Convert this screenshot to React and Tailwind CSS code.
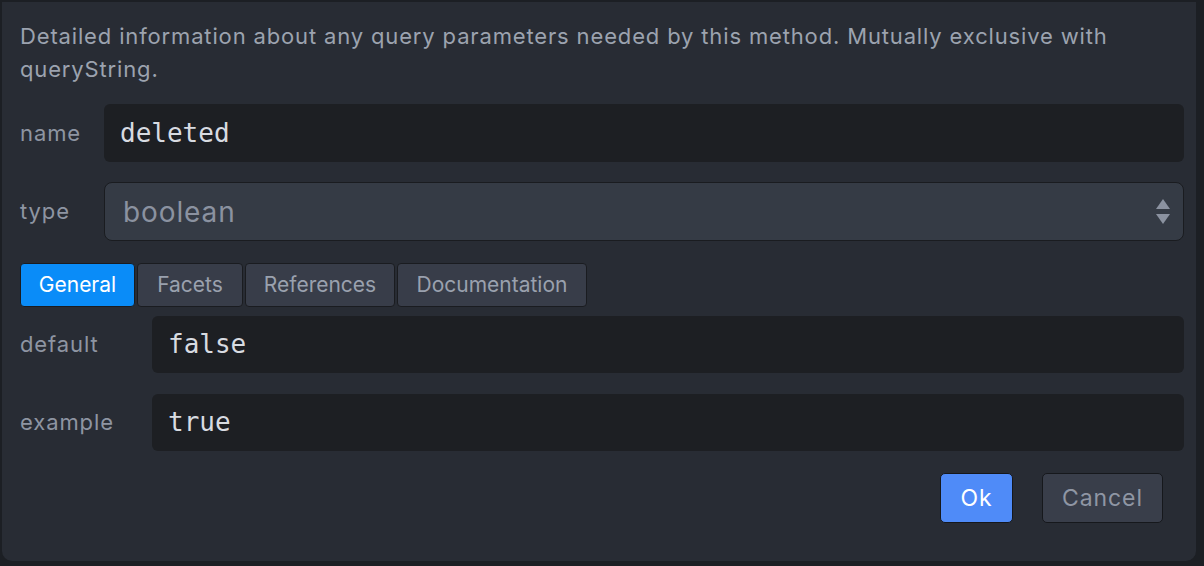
export default function App() {
  const sans = { fontFamily: 'Inter, "Liberation Sans", sans-serif' };
  const mono = { fontFamily: '"DejaVu Sans Mono", "Liberation Mono", monospace' };
  const tabs = [
    ["General", "w-[115px]"],
    ["Facets", "w-[106px]"],
    ["References", "w-[150px]"],
    ["Documentation", "w-[190px]"],
  ];
  return (
    <div className="w-[1204px] h-[566px] bg-[#1c1f24] overflow-hidden" style={sans}>
      <div className="ml-[2px] mt-[2px] w-[1194px] h-[559px] bg-[#282c34] rounded-b-[10px] pl-[18px] pr-[12px] pt-[18px]">
        <p className="text-[22px] leading-[33px] tracking-[0.85px] text-[#9ca3af] pr-[40px]">
          Detailed information about any query parameters needed by this method. Mutually exclusive with queryString.
        </p>
        <div className="mt-[18px] flex items-center h-[58px]">
          <div className="w-[84px] text-[22px] tracking-[0.9px] text-[#8e95a2]">name</div>
          <div className="flex-1 h-full bg-[#1d1f23] rounded-[6px] flex items-center pl-[16px] text-[26px] text-[#d8dbe1]" style={mono}>deleted</div>
        </div>
        <div className="mt-[20px] flex items-center h-[59px]">
          <div className="w-[84px] text-[22px] tracking-[0.9px] text-[#8e95a2]">type</div>
          <div className="flex-1 h-full bg-[#353b45] border border-[#1a1c20] rounded-[8px] flex items-center pl-[18px] pr-[12px] text-[28px] tracking-[0.9px] text-[#8b92a0]">
            <span className="flex-1">boolean</span>
            <svg width="16" height="30" viewBox="0 0 16 30">
              <polygon points="8,2 15,12 1,12" fill="#8b92a0" />
              <polygon points="1,17 15,17 8,27" fill="#8b92a0" />
            </svg>
          </div>
        </div>
        <div className="mt-[22px] flex gap-[2px] h-[44px]">
          {tabs.map(([t, w], i) => (
            <div
              key={t}
              className={
                i === 0
                  ? `${w} flex items-center justify-center rounded-[4px] border border-[#1a1c20] bg-[#0a8cf8] text-white text-[21px]`
                  : `${w} flex items-center justify-center rounded-[4px] border border-[#1a1c20] bg-[#383d49] text-[#9aa1ae] text-[21px]`
              }
            >
              {t}
            </div>
          ))}
        </div>
        <div className="mt-[9px] flex items-center h-[57px]">
          <div className="w-[132px] text-[22px] tracking-[0.9px] text-[#8e95a2]">default</div>
          <div className="flex-1 h-full bg-[#1d1f23] rounded-[6px] flex items-center pl-[16px] text-[26px] text-[#d8dbe1]" style={mono}>false</div>
        </div>
        <div className="mt-[21px] flex items-center h-[57px]">
          <div className="w-[132px] text-[22px] tracking-[0.9px] text-[#8e95a2]">example</div>
          <div className="flex-1 h-full bg-[#1d1f23] rounded-[6px] flex items-center pl-[16px] text-[26px] text-[#d8dbe1]" style={mono}>true</div>
        </div>
        <div className="mt-[22px] flex justify-end gap-[29px] pr-[21px]">
          <button className="w-[73px] h-[50px] rounded-[5px] border border-[#16181c] bg-[#4f8bf8] text-white text-[23px] tracking-[0.8px]">Ok</button>
          <button className="w-[121px] h-[50px] rounded-[5px] border border-[#16181c] bg-[#393e4a] text-[#8f96a4] text-[23px] tracking-[0.9px]">Cancel</button>
        </div>
      </div>
    </div>
  );
}
